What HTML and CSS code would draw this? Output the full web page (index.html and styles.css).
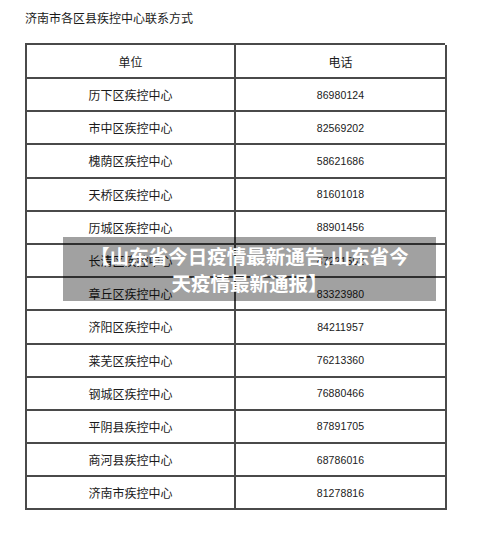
FILE: index.html
```html
<!DOCTYPE html>
<html lang="zh">
<head>
<meta charset="utf-8">
<link rel="stylesheet" href="styles.css">
</head>
<body>
<div class="page">
  <div class="title">济南市各区县疾控中心联系方式</div>
  <div class="table">
    <div class="cell head">单位</div><div class="cell head">电话</div>
    <div class="cell">历下区疾控中心</div><div class="cell num">86980124</div>
    <div class="cell">市中区疾控中心</div><div class="cell num">82569202</div>
    <div class="cell">槐荫区疾控中心</div><div class="cell num">58621686</div>
    <div class="cell">天桥区疾控中心</div><div class="cell num">81601018</div>
    <div class="cell">历城区疾控中心</div><div class="cell num">88901456</div>
    <div class="cell">长清区疾控中心</div><div class="cell num">87221552</div>
    <div class="cell">章丘区疾控中心</div><div class="cell num">83323980</div>
    <div class="cell">济阳区疾控中心</div><div class="cell num">84211957</div>
    <div class="cell">莱芜区疾控中心</div><div class="cell num">76213360</div>
    <div class="cell">钢城区疾控中心</div><div class="cell num">76880466</div>
    <div class="cell">平阴县疾控中心</div><div class="cell num">87891705</div>
    <div class="cell">商河县疾控中心</div><div class="cell num">68786016</div>
    <div class="cell">济南市疾控中心</div><div class="cell num">81278816</div>
  </div>
  <div class="banner">【山东省今日疫情最新通告,山东省今<br>天疫情最新通报】</div>
</div>
</body>
</html>
```
FILE: styles.css
```css
html, body {
  margin: 0;
  padding: 0;
  background: #ffffff;
}
.page {
  position: relative;
  width: 500px;
  height: 539px;
  font-family: "Noto Sans CJK SC", "Liberation Sans", sans-serif;
  color: #1a1a1a;
}
.title {
  padding: 10px 0 0 25px;
  height: 43px;
  box-sizing: border-box;
  font-size: 12px;
  line-height: 16px;
}
.table {
  margin-left: 25px;
  width: 420px;
  display: grid;
  grid-template-columns: 209px 211px;
  border-left: 2px solid #4a4a4a;
  border-top: 2px solid #4a4a4a;
  box-sizing: border-box;
}
.cell {
  height: 33.2px;
  box-sizing: border-box;
  border-right: 2px solid #4a4a4a;
  border-bottom: 2px solid #4a4a4a;
  display: flex;
  align-items: center;
  justify-content: center;
  font-size: 12px;
}
.cell.head {
  height: 34px;
}
.cell.num {
  font-family: "Liberation Sans", sans-serif;
  font-size: 10.5px;
  letter-spacing: 0.1px;
}
.banner {
  position: absolute;
  left: 63px;
  top: 237px;
  width: 373px;
  height: 64px;
  background: rgba(0, 0, 0, 0.37);
  color: #ffffff;
  font-weight: bold;
  font-size: 19.5px;
  line-height: 27px;
  text-align: center;
  padding-top: 5px;
  box-sizing: border-box;
}
```
